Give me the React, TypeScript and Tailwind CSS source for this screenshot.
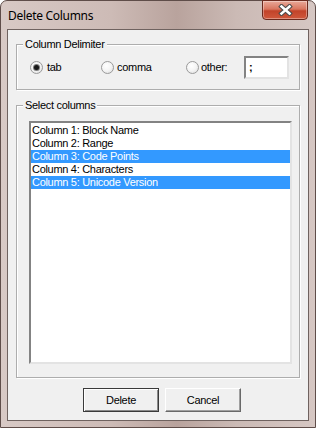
import React from "react";

const font = { fontFamily: '"Liberation Sans", Tahoma, Arial, sans-serif' };

function Radio({ checked }: { checked?: boolean }) {
  return (
    <div className="relative w-[13px] h-[13px] rounded-full border border-[#9a9a9a] bg-[radial-gradient(circle_at_40%_35%,#ffffff_0%,#f4f4f4_50%,#d8d8d8_100%)] flex items-center justify-center">
      {checked && <div className="w-[5px] h-[5px] rounded-full bg-[#1a1a1a] shadow-[0_0_0_1px_#7d7d7d]" />}
    </div>
  );
}

const rows = [
  { t: "Column 1: Block Name", s: false },
  { t: "Column 2: Range", s: false },
  { t: "Column 3: Code Points", s: true },
  { t: "Column 4: Characters", s: false },
  { t: "Column 5: Unicode Version", s: true },
];

export default function App() {
  return (
    <div className="w-[316px] h-[428px] relative overflow-hidden" style={font}>
      <div className="absolute inset-0 rounded-t-[7px] border border-[#5f4d49] bg-[linear-gradient(90deg,#d8c9c5_0%,#cdbbb6_35%,#b9a39d_56%,#cbbab5_75%,#d6c7c3_100%)] flex flex-col">
        {/* title bar */}
        <div className="h-[28px] flex items-start relative">
          <span className="ml-[7px] mt-[6px] text-[12px] tracking-[-0.3px] text-black" style={{ fontFamily: '"Noto Sans", "Open Sans", sans-serif' }}>
            Delete Columns
          </span>
          <div className="absolute right-[7px] top-[-1px] w-[46px] h-[20px] rounded-b-[4px] border border-[#6b2a1e] bg-[linear-gradient(180deg,#e9a999_0%,#d9765f_45%,#c2432a_55%,#d0583c_100%)] flex items-center justify-center shadow-[inset_0_0_0_1px_rgba(255,255,255,0.35)]">
            <svg width="15" height="12" viewBox="0 0 15 12">
              <path d="M3.5 2.5 L11.5 9.5 M11.5 2.5 L3.5 9.5" stroke="#4a4a4a" strokeWidth="4.6" strokeLinecap="square" />
              <path d="M3.5 2.5 L11.5 9.5 M11.5 2.5 L3.5 9.5" stroke="#ffffff" strokeWidth="2.6" strokeLinecap="square" />
            </svg>
          </div>
        </div>
        {/* client */}
        <div className="mx-[6px] h-[392px] border border-[#6f625f] bg-[#f0f0f0] flex flex-col px-[8px] pt-[14px] text-[11px] tracking-[-0.3px] text-black">
          {/* group 1 */}
          <div className="relative h-[46px] border border-[#adadad] shadow-[inset_1px_1px_0_#ffffff,1px_1px_0_#ffffff]">
            <span className="absolute left-[6px] top-[-8px] px-[2px] bg-[#f0f0f0] leading-[14px]">Column Delimiter</span>
            <div className="flex items-center pl-[13px] pt-[11px]">
              <div className="w-[71px] flex items-center gap-[4px]">
                <Radio checked />
                <span>tab</span>
              </div>
              <div className="w-[85px] flex items-center gap-[3px]">
                <Radio />
                <span>comma</span>
              </div>
              <div className="w-[58px] flex items-center gap-[2px]">
                <Radio />
                <span>other:</span>
              </div>
              <div className="w-[45px] h-[23px] border-2 border-t-[#838383] border-l-[#838383] border-r-[#e3e3e3] border-b-[#e3e3e3] bg-white flex items-center pl-[3px]">
                <span className="font-bold">;</span>
              </div>
            </div>
          </div>
          {/* group 2 */}
          <div className="relative mt-[15px] h-[273px] border border-[#adadad] shadow-[inset_1px_1px_0_#ffffff,1px_1px_0_#ffffff] pl-[12px] pr-[7px] pt-[15px]">
            <span className="absolute left-[6px] top-[-8px] px-[2px] bg-[#f0f0f0] leading-[14px]">Select columns</span>
            <div className="h-[243px] border-2 border-t-[#838383] border-l-[#838383] border-r-[#e3e3e3] border-b-[#e3e3e3] bg-white pt-[1px]">
              {rows.map((r) => (
                <div
                  key={r.t}
                  className={`h-[13px] leading-[13px] pl-[1px] ${r.s ? "bg-[#3399ff] text-white" : "text-black"}`}
                >
                  {r.t}
                </div>
              ))}
            </div>
          </div>
          {/* buttons */}
          <div className="flex mt-[10px] pl-[67px] gap-[6px]">
            <div className="w-[76px] h-[24px] border border-[#3a3a3a] bg-[#f0f0f0] flex items-center justify-center shadow-[inset_1px_1px_0_#ffffff,inset_-1px_-1px_0_#8a8a8a]">
              Delete
            </div>
            <div className="w-[76px] h-[24px] border border-t-[#ffffff] border-l-[#ffffff] border-r-[#696969] border-b-[#696969] bg-[#f0f0f0] flex items-center justify-center shadow-[inset_-1px_-1px_0_#a0a0a0]">
              Cancel
            </div>
          </div>
        </div>
      </div>
    </div>
  );
}
